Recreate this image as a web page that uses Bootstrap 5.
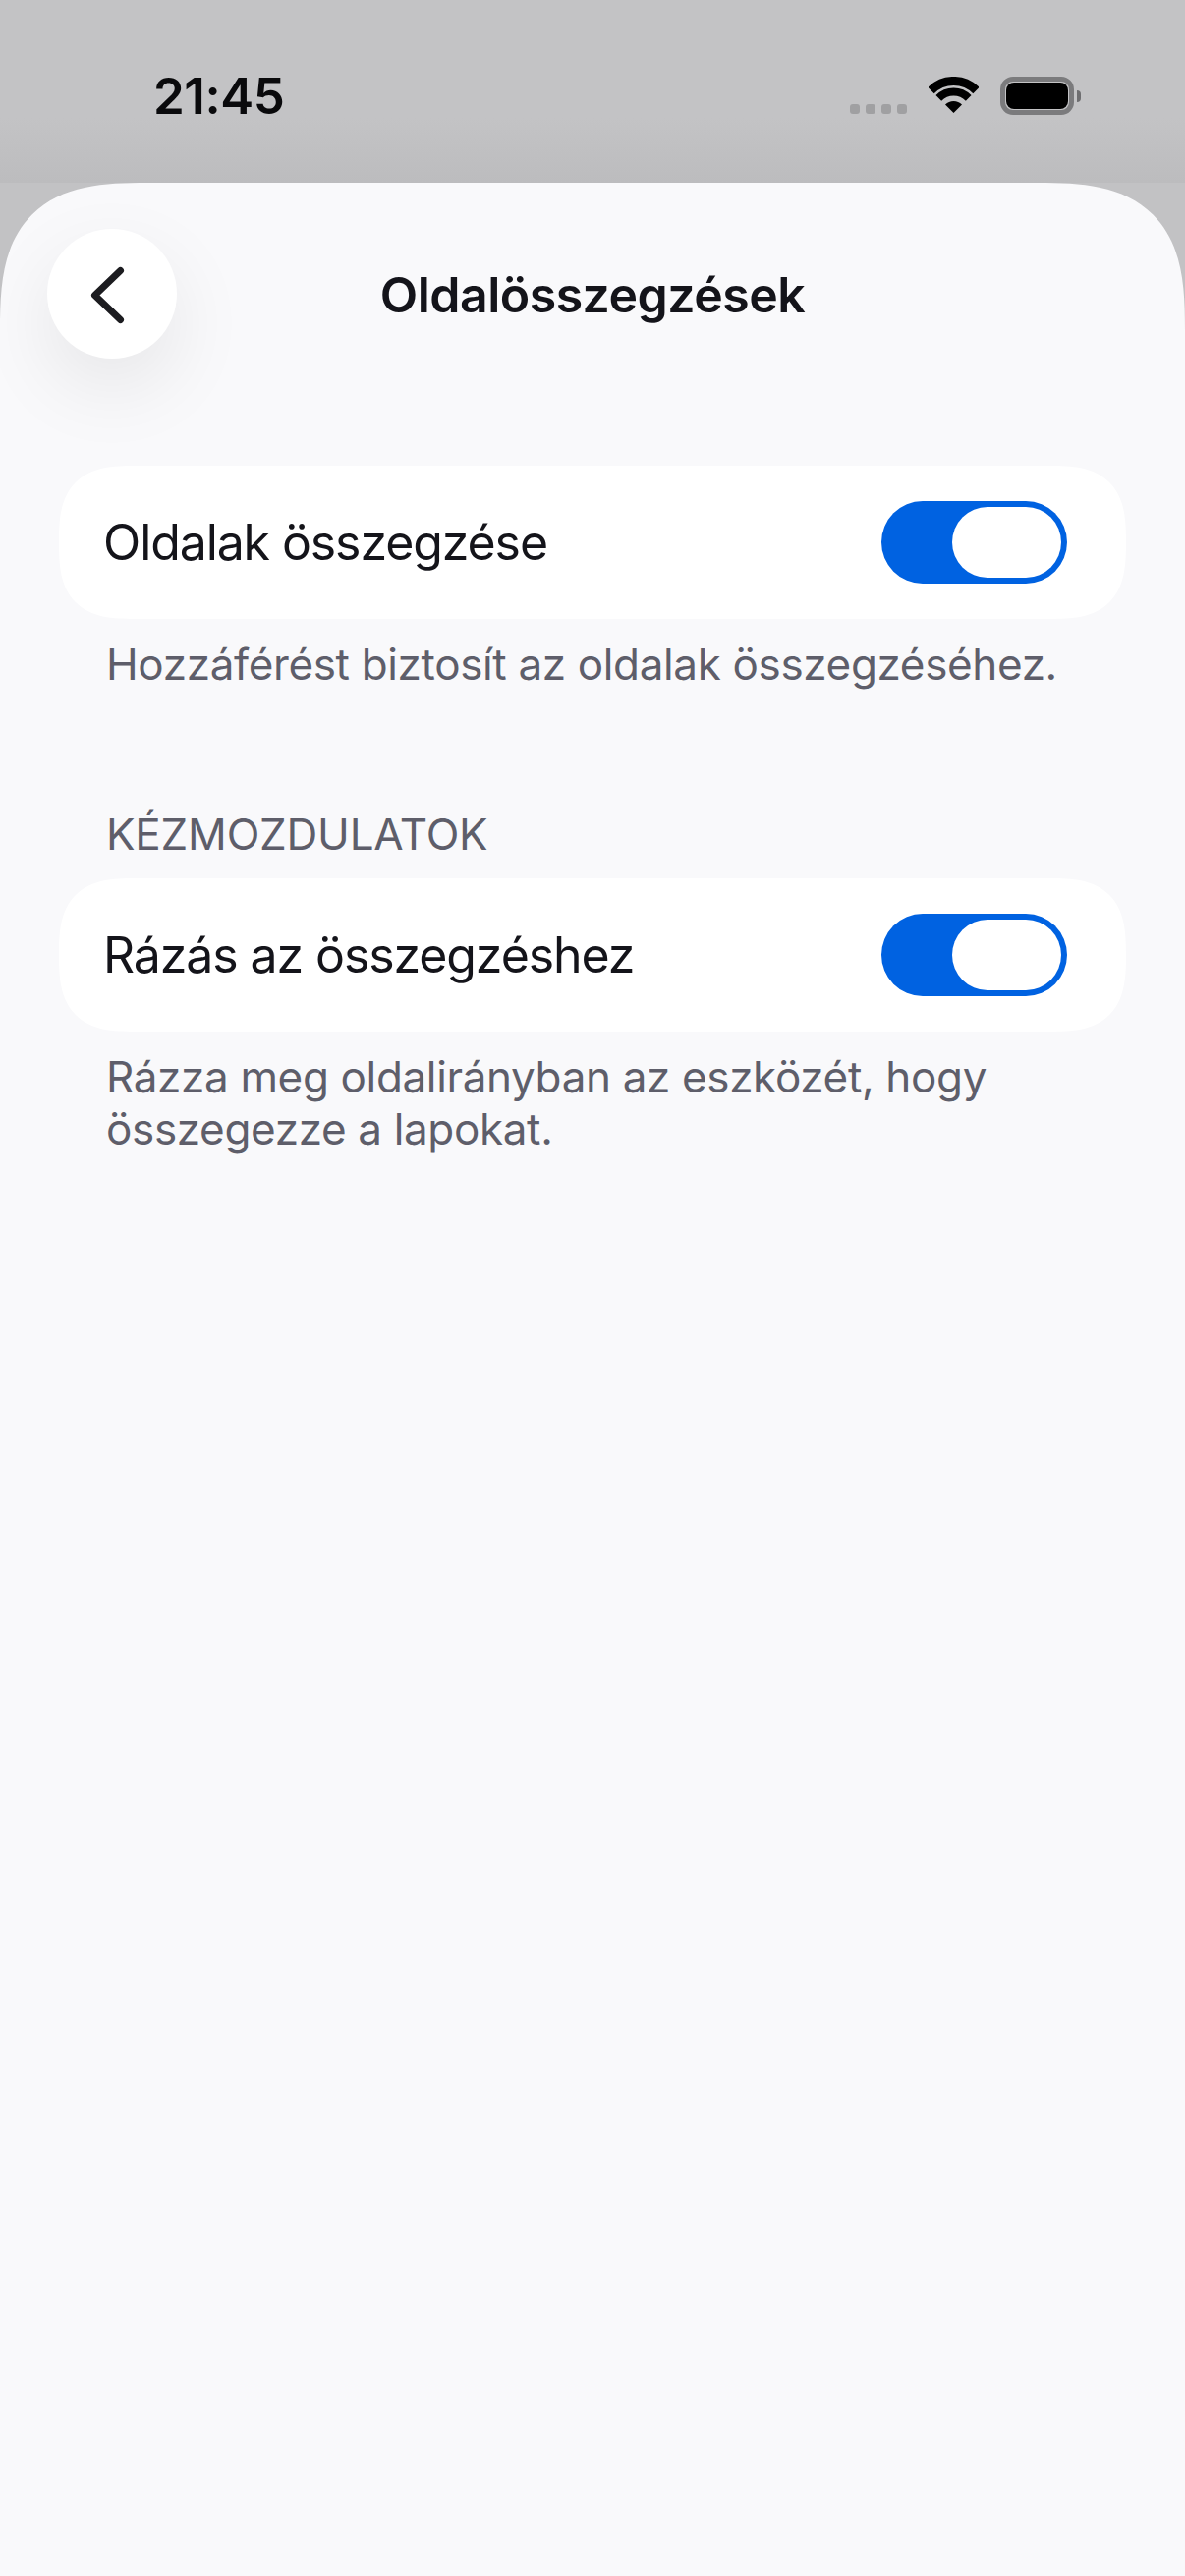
<!DOCTYPE html>
<html lang="hu">
<head>
    <meta charset="UTF-8">
    <title>Oldalösszegzések</title>
    <link href="https://cdn.jsdelivr.net/npm/bootstrap@5.3.3/dist/css/bootstrap.min.css" rel="stylesheet">
    <style>
        body { background: #c2c2c4; font-family: Inter, "Liberation Sans", sans-serif; color: #14141a; min-height: 2622px; overflow: hidden; }
        .phone-status { height: 186px; padding: 0 106px 0 156px; background: linear-gradient(#c3c3c5, #c3c3c5 120px, #bcbcbe); }
        .status-time { font-size: 51px; font-weight: 600; line-height: 62px; color: #0a0a0c; letter-spacing: -0.45px; padding-top: 67px; }
        .status-icons { padding-top: 78px; gap: 22px; }
        .sig-dots { gap: 6px; padding-top: 28px; }
        .sig-dots span { width: 10px; height: 10px; border-radius: 3px; background: #a0a0a2; }
        .batt-body { width: 75px; height: 39px; border: 5px solid #7b7b7d; border-radius: 13px; padding: 1px; }
        .batt-fill { background: #000; border-radius: 8px; height: 100%; }
        .batt-cap { width: 4px; height: 12px; margin-left: 3px; background: #6e6e70; border-radius: 0 6px 6px 0; }
        .page-sheet { min-height: 2436px; background: #f9f9fb; border-radius: 112px 112px 0 0; padding: 47px 48px 0; }
        .head-row { display: grid; grid-template-columns: 132px 1fr 132px; align-items: center; }
        .back-btn { width: 132px; height: 132px; border-radius: 50%; border: 0; padding: 0; background: #fff; box-shadow: 0 30px 80px rgba(0, 0, 0, .08); }
        .head-title { font-size: 50px; font-weight: 600; margin: 0; padding-top: 2px; letter-spacing: -0.5px; line-height: 60px; color: #14141a; }
        .set-group { margin: 0 12px; }
        .set-row { height: 156px; background: #fff; border-radius: 66px; padding: 0 60px 0 45px; }
        .set-label { font-size: 50px; letter-spacing: -1.1px; line-height: 60px; }
        .set-note { font-size: 44px; line-height: 53px; letter-spacing: -0.35px; color: #5e5e6a; margin: 20px 0 0; padding-left: 48px; }
        .set-head { font-size: 44px; line-height: 54px; letter-spacing: -0.2px; color: #5e5e6a; margin: 0 0 18px; padding-left: 48px; }
        .pill-toggle { width: 189px; height: 84px; border-radius: 42px; background: #0062e1; padding: 6px; }
        .pill-knob { width: 111px; height: 72px; border-radius: 36px; background: #fff; }
        .first-row { margin-top: 109px; }
        .second-head { margin-top: 119px; }
        @supports (corner-shape: squircle) {
            .page-sheet { border-radius: 150px 150px 0 0; corner-shape: superellipse(1.5); }
            .set-row { border-radius: 78px; corner-shape: superellipse(1.5); }
        }
    </style>
</head>
<body>

    <div class="phone-status d-flex justify-content-between align-items-start">
        <div class="status-time">21:45</div>
        <div class="status-icons d-flex align-items-start">
            <div class="sig-dots d-flex"><span></span><span></span><span></span><span></span></div>
            <svg width="51" height="37" viewBox="0 0 51 37" fill="none" stroke="#000">
                <path d="M2.5 14A32.5 32.5 0 0 1 48.5 14" stroke-width="9"/>
                <path d="M10.3 21.8A21.5 21.5 0 0 1 40.7 21.8" stroke-width="8"/>
                <path d="M25.5 37L17 28.5A12 12 0 0 1 34 28.5Z" fill="#000" stroke="none"/>
            </svg>
            <div class="d-flex align-items-center">
                <div class="batt-body"><div class="batt-fill"></div></div>
                <div class="batt-cap"></div>
            </div>
        </div>
    </div>

    <div class="page-sheet">
        <div class="head-row">
            <button class="back-btn d-flex align-items-center justify-content-center" aria-label="Vissza">
                <svg width="44" height="64" viewBox="0 0 44 64" fill="none" stroke="#1c1c20" stroke-width="7" stroke-linecap="round" stroke-linejoin="round">
                    <path d="M30.5 8.5L4.5 33.5L30.5 58.5"/>
                </svg>
            </button>
            <h1 class="head-title text-center">Oldalösszegzések</h1>
        </div>

        <div class="set-group">
            <div class="set-row d-flex align-items-center justify-content-between first-row">
                <span class="set-label">Oldalak összegzése</span>
                <span class="pill-toggle d-flex justify-content-end"><span class="pill-knob"></span></span>
            </div>
            <p class="set-note">Hozzáférést biztosít az oldalak összegzéséhez.</p>

            <p class="set-head second-head">KÉZMOZDULATOK</p>
            <div class="set-row d-flex align-items-center justify-content-between">
                <span class="set-label">Rázás az összegzéshez</span>
                <span class="pill-toggle d-flex justify-content-end"><span class="pill-knob"></span></span>
            </div>
            <p class="set-note">Rázza meg oldalirányban az eszközét, hogy<br>összegezze a lapokat.</p>
        </div>
    </div>
</body>
</html>
